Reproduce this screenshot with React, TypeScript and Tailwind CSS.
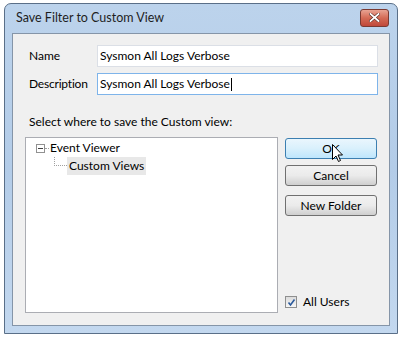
import React from "react";

const font = { fontFamily: 'Lato, "Open Sans", sans-serif' };

function Button({ label, hot }: { label: string; hot?: boolean }) {
  return (
    <div
      className={`relative flex h-[21px] w-[92px] items-center justify-center rounded-[3px] border text-[12px] text-black ${
        hot
          ? "border-[#3c7fb1] bg-gradient-to-b from-[#eaf6fd] via-[#d9f0fc] to-[#bee6fd]"
          : "border-[#707070] bg-gradient-to-b from-[#f2f2f2] via-[#ebebeb] to-[#cfcfcf]"
      }`}
    >
      {label}
    </div>
  );
}

export default function App() {
  return (
    <div className="h-[339px] w-[400px] overflow-hidden bg-white pl-[4px] pt-[3px]" style={font}>
      {/* window frame */}
      <div className="flex h-[331px] w-[394px] flex-col rounded-t-[7px] border border-[#5a6f88] bg-gradient-to-b from-[#bcd3ec] via-[#b3cce8] to-[#c3d8ef] px-[7px] pb-[7px]">
        {/* title bar */}
        <div className="flex h-[29px] items-center justify-between pl-[4px] pr-[1px]">
          <span className="text-[12.5px] text-[#1e1e1e]">Save Filter to Custom View</span>
          <div className="mb-[2px] flex h-[18px] w-[29px] items-center justify-center rounded-[3px] border border-[#7a3a32] bg-gradient-to-b from-[#e8a393] via-[#d46a55] to-[#c0483a]">
            <svg width="11" height="9" viewBox="0 0 11 9">
              <path d="M1.5 1 L9.5 8 M9.5 1 L1.5 8" stroke="#5a2a22" strokeWidth="3" strokeLinecap="square" />
              <path d="M1.5 1 L9.5 8 M9.5 1 L1.5 8" stroke="#fff" strokeWidth="1.8" strokeLinecap="square" />
            </svg>
          </div>
        </div>

        {/* client area */}
        <div className="flex flex-1 flex-col border border-[#8595a8] bg-[#f0f0f0] text-[12px] text-black">
          <div className="flex items-center pl-[16px] pr-[11px] pt-[11px]">
            <span className="w-[68px]">Name</span>
            <div className="flex h-[22px] flex-1 items-center border border-[#dbdfe6] bg-white px-[2px]">
              Sysmon All Logs Verbose
            </div>
          </div>
          <div className="flex items-center pl-[16px] pr-[11px] pt-[6px]">
            <span className="w-[68px] tracking-[-0.2px]">Description</span>
            <div className="flex h-[22px] flex-1 items-center border border-[#7eb4ea] bg-white px-[2px]">
              Sysmon All Logs Verbose
              <span className="ml-[1px] h-[13px] w-px bg-black" />
            </div>
          </div>
          <div className="pl-[16px] pt-[18px]">Select where to save the Custom view:</div>

          <div className="flex flex-1 gap-[7px] pb-[12px] pl-[12px] pr-[12px] pt-[6px]">
            {/* tree */}
            <div className="w-[254px] border border-[#abadb3] bg-white pl-[10px] pt-px">
              <div className="flex h-[18px] items-center">
                <div className="flex h-[9px] w-[9px] items-center justify-center border border-[#919191] bg-white">
                  <span className="h-px w-[5px] bg-[#404040]" />
                </div>
                <span className="w-[4px] border-t border-dotted border-[#a0a0a0]" />
                <span className="pl-[1px]">Event Viewer</span>
              </div>
              <div className="flex h-[18px] items-start pl-[18px]">
                <span className="h-[9px] w-[13px] border-b border-l border-dotted border-[#a0a0a0]" />
                <span className="flex h-[18px] items-center bg-[#e8e8e8] px-[2px]">Custom Views</span>
              </div>
            </div>

            {/* buttons */}
            <div className="flex flex-1 flex-col pt-[1px]">
              <div className="relative">
                <Button label="OK" hot />
                <svg className="absolute left-[47px] top-[6px]" width="12" height="19" viewBox="0 0 12 19">
                  <path d="M0.5 0.5 L0.5 15.5 L4 12 L6.5 17.5 L8.5 16.5 L6 11 L10.5 11 Z" fill="#fff" stroke="#000" strokeWidth="1" strokeLinejoin="round" />
                </svg>
              </div>
              <div className="mt-[6px]">
                <Button label="Cancel" />
              </div>
              <div className="mt-[9px]">
                <Button label="New Folder" />
              </div>
              <div className="mt-auto flex items-center pb-[2px]">
                <div className="flex h-[12px] w-[12px] items-center justify-center border border-[#8e8f8f] bg-gradient-to-b from-[#dcdcdc] to-[#f6f6f6]">
                  <svg width="9" height="9" viewBox="0 0 9 9">
                    <path d="M1.5 4.5 L3.5 7 L7.5 1.5" fill="none" stroke="#2b5a9c" strokeWidth="1.6" />
                  </svg>
                </div>
                <span className="pl-[6px]">All Users</span>
              </div>
            </div>
          </div>
        </div>
      </div>
    </div>
  );
}
